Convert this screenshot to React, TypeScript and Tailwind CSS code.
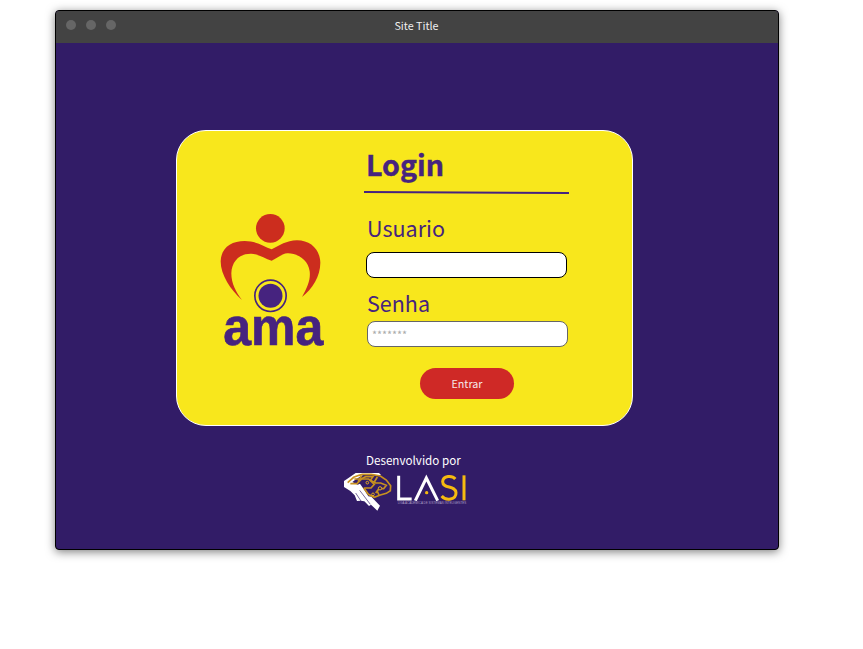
import React from "react";

function TitleBar() {
  return (
    <header className="grid h-8 grid-cols-[1fr_auto_1fr] items-center bg-[#434343] text-[#f0f0f0]">
      <div className="flex gap-2.5 pl-[10px] pb-1">
        <span className="size-2.5 rounded-full bg-[#666666]" />
        <span className="size-2.5 rounded-full bg-[#666666]" />
        <span className="size-2.5 rounded-full bg-[#666666]" />
      </div>
      <h1 className="pb-[3px] pr-px text-[10.75px] leading-4">Site Title</h1>
      <div />
    </header>
  );
}

function AmaLogo() {
  return (
    <svg className="h-[160px] w-[140px] shrink-0" viewBox="0 0 420 480" role="img" aria-label="ama">
      <circle cx="211" cy="85" r="43" fill="#cc2d1e" />
      <path
        d="M126 300C92 270 62 225 62 184C63 143 94 123 134 123C169 123 191 139 215 148C239 137 259 121 291 121C333 121 360 150 361 188C361 229 337 266 306 291C323 260 332 239 329 214C325 179 292 159 262 160C243 162 231 175 215 182C196 177 179 163 154 161C119 160 95 184 94 220C94 251 108 277 126 300Z"
        fill="#cc2d1e"
      />
      <circle cx="211.500" cy="287.500" r="47" fill="none" stroke="#46237f" strokeWidth="5" />
      <circle cx="211.500" cy="287.500" r="36" fill="#46237f" />
      <text
        x="70"
        y="436"
        fill="#46237f"
        stroke="#46237f"
        strokeWidth="2"
        fontFamily="'Liberation Sans', Arial, sans-serif"
        fontWeight="700"
        fontSize="158"
        textLength="300"
        lengthAdjust="spacingAndGlyphs"
      >
        ama
      </text>
    </svg>
  );
}

function LasiLogo() {
  return (
    <svg className="h-[40px] w-[125px]" viewBox="0 0 375 120" role="img" aria-label="LASI">
      <path
        d="M3 30L12 24L38 6H108L114 12H60L40 24L28 33L44 41L51 38L66 60L76 76L85 77L111 104L103 119L84 101L78 105L64 91L53 89L42 90L35 73L22 60L3 48Z"
        fill="#ffffff"
      />
      <path d="M38 66L54 90M50 58L82 100" stroke="#321c67" strokeWidth="2" />
      <g fill="none" stroke="#c8911f" strokeWidth="5">
        <path d="M14 35L32 19L48 13L58 10H85L112 15L130 27L143 44L142 59L130 67L112 72L94 79L76 70L62 50" />
        <path d="M22 38H42L56 24H77L94 40L84 51H64" />
        <path d="M34 24H54L68 17H90L82 28L98 36H113L130 43L122 53H108L98 66" />
        <path d="M56 14L45 32M103 18L94 33M108 72L102 59" />
      </g>
      <g fill="#321c67" stroke="#e0a722" strokeWidth="3">
        <circle cx="73" cy="35" r="4" />
        <circle cx="111" cy="52" r="5" />
        <circle cx="90" cy="70" r="4" />
      </g>
      <g fill="none" strokeWidth="9" strokeLinejoin="miter">
        <path d="M167 14V84H206" stroke="#ffffff" />
        <path d="M217 89L250 21L284 89" stroke="#ffffff" />
        <path
          d="M337 24C328 13 300 13 299 32C299 54 338 42 339 65C340 87 308 90 296 75"
          stroke="#f5ba10"
        />
        <path d="M363 13V88" stroke="#f5ba10" />
      </g>
      <circle cx="251" cy="65" r="5" fill="#f5ba10" />
      <text
        x="164"
        y="98"
        fill="#a99bc4"
        fontFamily="'Liberation Sans', Arial, sans-serif"
        fontSize="8"
        textLength="206"
        lengthAdjust="spacingAndGlyphs"
      >
        LIGA ACADÊMICA DE SISTEMAS INTELIGENTES
      </text>
    </svg>
  );
}

function LoginForm() {
  return (
    <form className="flex w-[206px] flex-col pt-[11px] text-[#46237f]" onSubmit={(e) => e.preventDefault()}>
      <h2 className="ml-[2px] h-[47px] text-[28.6px] leading-[43px] font-bold [-webkit-text-stroke:0.4px_#46237f]">
        Login
      </h2>
      <svg className="h-[6px] w-[206px]" viewBox="0 0 206 6" aria-hidden="true">
        <path d="M0 3L205 4" stroke="#46237f" strokeWidth="2" />
      </svg>
      <label htmlFor="user" className="ml-[3px] mt-[15px] h-[42px] text-[21.5px] leading-[36px]">
        Usuario
      </label>
      <input
        id="user"
        className="ml-[2px] h-[26px] w-[201px] rounded-[8px] border border-black bg-white px-1 outline-none"
      />
      <label htmlFor="password" className="ml-[3px] mt-[7px] h-[36px] text-[21.5px] leading-[36px]">
        Senha
      </label>
      <input
        id="password"
        placeholder="*******"
        className="ml-[3px] h-[26px] w-[201px] rounded-[8px] border border-[#666666] bg-white px-1 text-[10.75px] outline-none placeholder:text-[#aaaaaa]"
      />
      <button className="ml-[56px] mt-[21px] h-[31px] w-[94px] rounded-full bg-[#cf2926] pt-[2px] text-[10.75px] text-[#f5e8e8]">
        Entrar
      </button>
    </form>
  );
}

export default function App() {
  return (
    <div className="h-[649px] w-[863px] overflow-hidden bg-white pl-[55px] pt-[10px] font-['Noto_Sans_CJK_SC','Noto_Sans',sans-serif]">
      <div className="h-[540px] w-[724px] overflow-hidden rounded-[4px] border border-black bg-[#321c67] shadow-[0_2px_10px_rgba(0,0,0,0.5)]">
        <TitleBar />
        <main className="flex flex-col pt-[87px]">
          <section className="ml-[120px] flex h-[296px] w-[457px] rounded-[30px] border border-white bg-[#f8e71c]">
            <div className="w-[187px] pl-[23px] pt-[69px]">
              <AmaLogo />
            </div>
            <LoginForm />
          </section>
          <footer className="ml-[287px] mt-[25px] flex w-[125px] flex-col text-white">
            <p className="ml-[23px] h-[20px] whitespace-nowrap text-[11.65px] leading-[18px]">Desenvolvido por</p>
            <LasiLogo />
          </footer>
        </main>
      </div>
    </div>
  );
}
